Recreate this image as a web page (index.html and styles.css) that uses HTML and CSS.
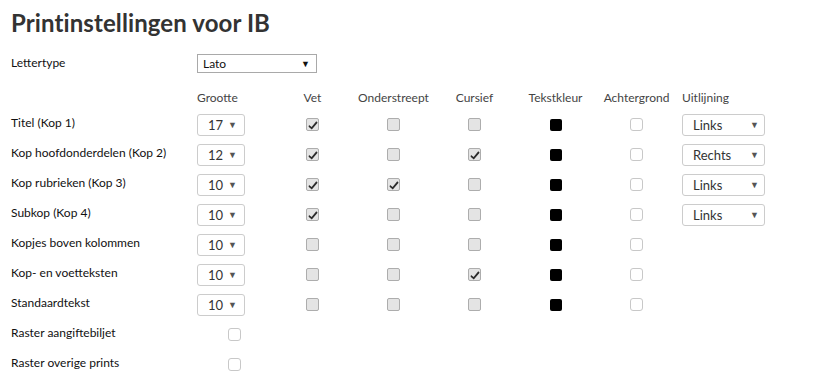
FILE: index.html
```html
<!DOCTYPE html>
<html lang="nl">
<head>
<meta charset="utf-8">
<title>Printinstellingen voor IB</title>
<link rel="stylesheet" href="styles.css">
</head>
<body>
<div class="page">
  <h1 class="title">Printinstellingen voor IB</h1>

  <div class="font-row">
    <div class="label">Lettertype</div>
    <div class="font-select">Lato<span class="arrow-black">&#9660;</span></div>
  </div>

  <div class="grid">
    <div class="head"></div>
    <div class="head left">Grootte</div>
    <div class="head">Vet</div>
    <div class="head">Onderstreept</div>
    <div class="head">Cursief</div>
    <div class="head">Tekstkleur</div>
    <div class="head">Achtergrond</div>
    <div class="head left pad">Uitlijning</div>

    <!-- Titel -->
    <div class="label">Titel (Kop 1)</div>
    <div class="cell left"><span class="size-select">17<span class="arrow">&#9660;</span></span></div>
    <div class="cell"><span class="cb gray on"><svg viewBox="0 0 10 10"><path d="M1 5.1 L3.6 7 L8.3 1.3 L9.6 2.7 L3.8 9.4 L0.6 6.7 Z"/></svg></span></div>
    <div class="cell"><span class="cb gray"></span></div>
    <div class="cell"><span class="cb gray"></span></div>
    <div class="cell"><span class="swatch"></span></div>
    <div class="cell"><span class="cb white"></span></div>
    <div class="cell left pad"><span class="align-select">Links<span class="arrow">&#9660;</span></span></div>

    <!-- Kop 2 -->
    <div class="label">Kop hoofdonderdelen (Kop 2)</div>
    <div class="cell left"><span class="size-select">12<span class="arrow">&#9660;</span></span></div>
    <div class="cell"><span class="cb gray on"><svg viewBox="0 0 10 10"><path d="M1 5.1 L3.6 7 L8.3 1.3 L9.6 2.7 L3.8 9.4 L0.6 6.7 Z"/></svg></span></div>
    <div class="cell"><span class="cb gray"></span></div>
    <div class="cell"><span class="cb gray on"><svg viewBox="0 0 10 10"><path d="M1 5.1 L3.6 7 L8.3 1.3 L9.6 2.7 L3.8 9.4 L0.6 6.7 Z"/></svg></span></div>
    <div class="cell"><span class="swatch"></span></div>
    <div class="cell"><span class="cb white"></span></div>
    <div class="cell left pad"><span class="align-select">Rechts<span class="arrow">&#9660;</span></span></div>

    <!-- Kop 3 -->
    <div class="label">Kop rubrieken (Kop 3)</div>
    <div class="cell left"><span class="size-select">10<span class="arrow">&#9660;</span></span></div>
    <div class="cell"><span class="cb gray on"><svg viewBox="0 0 10 10"><path d="M1 5.1 L3.6 7 L8.3 1.3 L9.6 2.7 L3.8 9.4 L0.6 6.7 Z"/></svg></span></div>
    <div class="cell"><span class="cb gray on"><svg viewBox="0 0 10 10"><path d="M1 5.1 L3.6 7 L8.3 1.3 L9.6 2.7 L3.8 9.4 L0.6 6.7 Z"/></svg></span></div>
    <div class="cell"><span class="cb gray"></span></div>
    <div class="cell"><span class="swatch"></span></div>
    <div class="cell"><span class="cb white"></span></div>
    <div class="cell left pad"><span class="align-select">Links<span class="arrow">&#9660;</span></span></div>

    <!-- Kop 4 -->
    <div class="label">Subkop (Kop 4)</div>
    <div class="cell left"><span class="size-select">10<span class="arrow">&#9660;</span></span></div>
    <div class="cell"><span class="cb gray on"><svg viewBox="0 0 10 10"><path d="M1 5.1 L3.6 7 L8.3 1.3 L9.6 2.7 L3.8 9.4 L0.6 6.7 Z"/></svg></span></div>
    <div class="cell"><span class="cb gray"></span></div>
    <div class="cell"><span class="cb gray"></span></div>
    <div class="cell"><span class="swatch"></span></div>
    <div class="cell"><span class="cb white"></span></div>
    <div class="cell left pad"><span class="align-select">Links<span class="arrow">&#9660;</span></span></div>

    <!-- Kopjes -->
    <div class="label">Kopjes boven kolommen</div>
    <div class="cell left"><span class="size-select">10<span class="arrow">&#9660;</span></span></div>
    <div class="cell"><span class="cb gray"></span></div>
    <div class="cell"><span class="cb gray"></span></div>
    <div class="cell"><span class="cb gray"></span></div>
    <div class="cell"><span class="swatch"></span></div>
    <div class="cell"><span class="cb white"></span></div>
    <div class="cell"></div>

    <!-- Kop- en voetteksten -->
    <div class="label">Kop- en voetteksten</div>
    <div class="cell left"><span class="size-select">10<span class="arrow">&#9660;</span></span></div>
    <div class="cell"><span class="cb gray"></span></div>
    <div class="cell"><span class="cb gray"></span></div>
    <div class="cell"><span class="cb gray on"><svg viewBox="0 0 10 10"><path d="M1 5.1 L3.6 7 L8.3 1.3 L9.6 2.7 L3.8 9.4 L0.6 6.7 Z"/></svg></span></div>
    <div class="cell"><span class="swatch"></span></div>
    <div class="cell"><span class="cb white"></span></div>
    <div class="cell"></div>

    <!-- Standaardtekst -->
    <div class="label">Standaardtekst</div>
    <div class="cell left"><span class="size-select">10<span class="arrow">&#9660;</span></span></div>
    <div class="cell"><span class="cb gray"></span></div>
    <div class="cell"><span class="cb gray"></span></div>
    <div class="cell"><span class="cb gray"></span></div>
    <div class="cell"><span class="swatch"></span></div>
    <div class="cell"><span class="cb white"></span></div>
    <div class="cell"></div>

    <!-- Raster -->
    <div class="label">Raster aangiftebiljet</div>
    <div class="cell"><span class="cb white"></span></div>
    <div class="cell span6"></div>

    <div class="label">Raster overige prints</div>
    <div class="cell"><span class="cb white"></span></div>
    <div class="cell span6"></div>
  </div>
</div>
</body>
</html>
```

FILE: styles.css
```css
* { box-sizing: border-box; }

html, body {
  margin: 0;
  padding: 0;
  background: #ffffff;
}

body {
  font-family: Lato, "Open Sans", Arial, sans-serif;
  font-size: 12px;
  color: #333333;
}

.page {
  padding: 8px 0 0 11px;
}

.title {
  margin: 0;
  font-size: 24px;
  font-weight: 700;
  color: #333333;
  line-height: 30px;
  letter-spacing: 0.1px;
}

.font-row {
  display: grid;
  grid-template-columns: 186px auto;
  align-items: center;
  height: 30px;
  margin-top: 10px;
}

.label {
  color: #111111;
  font-size: 12px;
  display: flex;
  align-items: center;
  height: 30px;
  padding-bottom: 3px;
}

.font-row .label { padding-bottom: 1px; }

.font-select {
  width: 120px;
  height: 19px;
  border: 1px solid #a9a9a9;
  display: flex;
  align-items: center;
  justify-content: space-between;
  padding: 0 6px 0 5px;
  font-size: 12px;
  color: #111;
}

.arrow-black {
  font-size: 9px;
  color: #111;
}

.grid {
  display: grid;
  grid-template-columns: 186px 75px repeat(5, 81px) 100px;
  grid-template-rows: 27px;
  grid-auto-rows: 30px;
  margin-top: 4px;
}

.head {
  display: flex;
  align-items: center;
  justify-content: center;
  color: #444444;
  font-size: 12px;
  height: 30px;
}

.cell {
  display: flex;
  align-items: center;
  justify-content: center;
  height: 30px;
  padding-top: 1px;
}

.left { justify-content: flex-start; }
.pad { padding-left: 5px; }
.span6 { grid-column: span 6; }

.size-select,
.align-select {
  display: flex;
  align-items: center;
  justify-content: space-between;
  height: 22px;
  border: 1px solid #cccccc;
  border-radius: 3px;
  background: #ffffff;
  color: #333333;
  font-size: 13px;
  padding: 1px 7px 0 10px;
}

.size-select { width: 48px; }
.align-select { width: 83px; padding-right: 5px; }

.arrow {
  font-size: 9px;
  color: #555555;
  margin-top: -2px;
}

.cb {
  display: inline-flex;
  align-items: center;
  justify-content: center;
  width: 13px;
  height: 13px;
  border-radius: 2px;
}

.cb.gray {
  background: #e4e4e4;
  border: 1px solid #adadad;
}

.cb.white {
  background: #ffffff;
  border: 1px solid #c8c8c8;
  border-radius: 3px;
}

.cb svg {
  width: 10px;
  height: 10px;
  fill: #2b2b2b;
}

.swatch {
  display: inline-block;
  width: 12px;
  height: 12px;
  background: #000000;
  border-radius: 2px;
}
```
